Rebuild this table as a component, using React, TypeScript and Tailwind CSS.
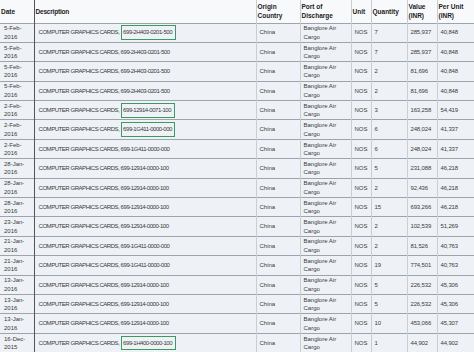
const rows: [string, string, string, boolean, string, string, string][] = [
  ['5-Feb-', '2016', '699-2H403-0201-500', true, '7', '285,937', '40,848'],
  ['5-Feb-', '2016', '699-2H403-0201-500', false, '7', '285,937', '40,848'],
  ['5-Feb-', '2016', '699-2H403-0201-500', false, '2', '81,696', '40,848'],
  ['5-Feb-', '2016', '699-2H403-0201-500', false, '2', '81,696', '40,848'],
  ['2-Feb-', '2016', '699-12914-0071-100', true, '3', '163,258', '54,419'],
  ['2-Feb-', '2016', '699-1G411-0000-000', true, '6', '248,024', '41,337'],
  ['2-Feb-', '2016', '699-1G411-0000-000', false, '6', '248,024', '41,337'],
  ['28-Jan-', '2016', '699-12914-0000-100', false, '5', '231,088', '46,218'],
  ['28-Jan-', '2016', '699-12914-0000-100', false, '2', '92,436', '46,218'],
  ['28-Jan-', '2016', '699-12914-0000-100', false, '15', '693,266', '46,218'],
  ['23-Jan-', '2016', '699-12914-0000-100', false, '2', '102,539', '51,269'],
  ['21-Jan-', '2016', '699-1G411-0000-000', false, '2', '81,526', '40,763'],
  ['21-Jan-', '2016', '699-1G411-0000-000', false, '19', '774,501', '40,763'],
  ['13-Jan-', '2016', '699-12914-0000-100', false, '5', '226,532', '45,306'],
  ['13-Jan-', '2016', '699-12914-0000-100', false, '5', '226,532', '45,306'],
  ['13-Jan-', '2016', '699-12914-0000-100', false, '10', '453,066', '45,307'],
  ['16-Dec-', '2015', '699-1H400-0000-100', true, '1', '44,902', '44,902'],
];

export default function App() {
  return (
    <div className="w-[474px] h-[352px] overflow-hidden bg-white font-['Liberation_Sans',Arial,sans-serif] text-[#3a3a3a]">
      <table className="table-fixed w-[474px] border-collapse text-[6px] leading-[8.5px]">
        <colgroup>
          <col className="w-[34px]" />
          <col className="w-[222px]" />
          <col className="w-[44px]" />
          <col className="w-[51px]" />
          <col className="w-[20px]" />
          <col className="w-[36px]" />
          <col className="w-[30px]" />
          <col className="w-[37px]" />
        </colgroup>
        <thead>
          <tr className="h-[23px] bg-[#f8f9fb] text-left align-middle text-[6.5px] leading-[9px] font-bold text-[#222]">
            <th className="border-r border-r-[#555] px-[1px]">Date</th>
            <th className="border-r border-[#c9ced6] px-[1px] tracking-[-0.2px]">Description</th>
            <th className="border-r border-[#c9ced6] px-[1px]">Origin Country</th>
            <th className="border-r border-[#c9ced6] px-[1px]">Port of Discharge</th>
            <th className="border-r border-[#c9ced6] px-[1px]">Unit</th>
            <th className="border-r border-[#c9ced6] px-[1px]">Quantity</th>
            <th className="border-r border-[#c9ced6] px-[1px]">Value (INR)</th>
            <th className="px-[1px]">Per Unit (INR)</th>
          </tr>
        </thead>
        <tbody>
          {rows.map((r, i) => (
            <tr key={i} className="h-[19.4px] bg-[#eef2f7] border-t border-[#9ea4ad] align-middle">
              <td className="border-r border-r-[#555] px-[4px]">
                {r[0]}
                <br />
                {r[1]}
              </td>
              <td className="border-r border-[#c9ced6] px-[4px] whitespace-nowrap tracking-[-0.45px]">
                COMPUTER GRAPHICS CARDS,{' '}
                {r[3] ? (
                  <span className="inline-block border-[1.5px] border-[#3b9a5c] pl-[1.5px] pr-[2.5px] py-[2px] leading-[8.5px]">{r[2]}</span>
                ) : (
                  r[2]
                )}
              </td>
              <td className="border-r border-[#c9ced6] px-[3px]">China</td>
              <td className="border-r border-[#c9ced6] px-[3px]">
                Banglore Air
                <br />
                Cargo
              </td>
              <td className="border-r border-[#c9ced6] px-[3px]">NOS</td>
              <td className="border-r border-[#c9ced6] px-[3px]">{r[4]}</td>
              <td className="border-r border-[#c9ced6] px-[3px] tracking-[-0.15px]">{r[5]}</td>
              <td className="px-[3px] tracking-[-0.15px]">{r[6]}</td>
            </tr>
          ))}
        </tbody>
      </table>
    </div>
  );
}
